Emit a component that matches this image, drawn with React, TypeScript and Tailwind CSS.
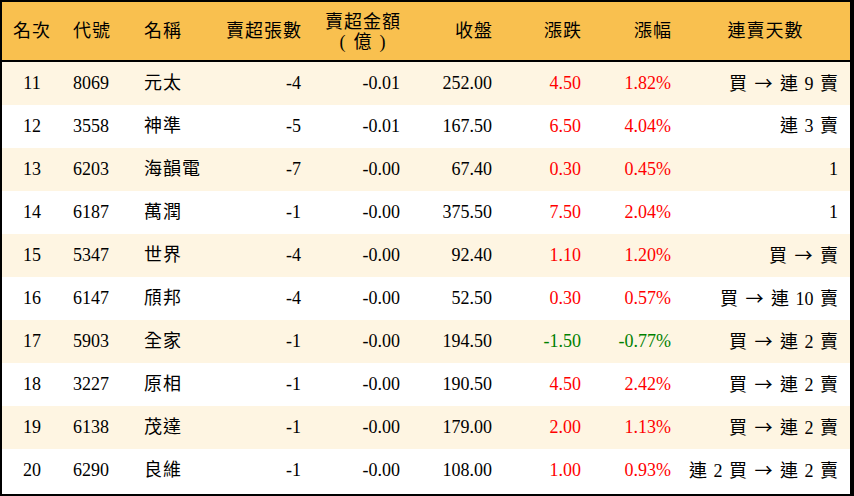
import React from 'react'

type Row = {
  rank: number
  code: string
  name: string
  qty: string
  amount: string
  close: string
  change: string
  pct: string
  streak: string
}

const rows: Row[] = [
  { rank: 11, code: '8069', name: '元太', qty: '-4', amount: '-0.01', close: '252.00', change: '4.50', pct: '1.82%', streak: '買 → 連 9 賣' },
  { rank: 12, code: '3558', name: '神準', qty: '-5', amount: '-0.01', close: '167.50', change: '6.50', pct: '4.04%', streak: '連 3 賣' },
  { rank: 13, code: '6203', name: '海韻電', qty: '-7', amount: '-0.00', close: '67.40', change: '0.30', pct: '0.45%', streak: '1' },
  { rank: 14, code: '6187', name: '萬潤', qty: '-1', amount: '-0.00', close: '375.50', change: '7.50', pct: '2.04%', streak: '1' },
  { rank: 15, code: '5347', name: '世界', qty: '-4', amount: '-0.00', close: '92.40', change: '1.10', pct: '1.20%', streak: '買 → 賣' },
  { rank: 16, code: '6147', name: '頎邦', qty: '-4', amount: '-0.00', close: '52.50', change: '0.30', pct: '0.57%', streak: '買 → 連 10 賣' },
  { rank: 17, code: '5903', name: '全家', qty: '-1', amount: '-0.00', close: '194.50', change: '-1.50', pct: '-0.77%', streak: '買 → 連 2 賣' },
  { rank: 18, code: '3227', name: '原相', qty: '-1', amount: '-0.00', close: '190.50', change: '4.50', pct: '2.42%', streak: '買 → 連 2 賣' },
  { rank: 19, code: '6138', name: '茂達', qty: '-1', amount: '-0.00', close: '179.00', change: '2.00', pct: '1.13%', streak: '買 → 連 2 賣' },
  { rank: 20, code: '6290', name: '良維', qty: '-1', amount: '-0.00', close: '108.00', change: '1.00', pct: '0.93%', streak: '連 2 買 → 連 2 賣' },
]

const cols = 'grid grid-cols-[60px_72px_76px_101px_99px_92px_89px_90px_169px]'

// the arrow is drawn wide in the reference, so give it the CJK face
function Streak({ text }: { text: string }) {
  const parts = text.split('→')
  return (
    <>
      {parts.map((p, i) => (
        <React.Fragment key={i}>
          {i > 0 && (
            <span style={{ fontFamily: '"Noto Sans CJK TC", sans-serif' }} className="inline-block w-[20px] text-center">
              →
            </span>
          )}
          {p}
        </React.Fragment>
      ))}
    </>
  )
}

export default function App() {
  return (
    <div
      className="w-[854px] h-[496px] bg-white border-t-2 border-l-2 border-r-4 border-b-2 border-black text-[18px] text-black"
      style={{ fontFamily: '"Liberation Serif", "Noto Sans CJK TC", serif' }}
    >
      {/* header */}
      <div className={`${cols} h-[60px] items-center bg-[#f9c04f] border-b-2 border-black tracking-[1px]`}>
        <div className="text-center">名次</div>
        <div className="pl-[11px]">代號</div>
        <div className="pl-[10px]">名稱</div>
        <div className="text-right pr-[9px]">賣超張數</div>
        <div className="text-right pr-[9px] leading-[20px] pt-[2px]">
          <span className="inline-block text-center">
            賣超金額
            <br />
            <span className="inline-flex items-center gap-[7px]">
              <span>(</span>
              <span>億</span>
              <span>)</span>
            </span>
          </span>
        </div>
        <div className="text-right pr-[9px]">收盤</div>
        <div className="text-right pr-[9px]">漲跌</div>
        <div className="text-right pr-[9px]">漲幅</div>
        <div className="text-center">連賣天數</div>
      </div>

      {rows.map((r, i) => {
        const color = r.change.startsWith('-') ? 'text-[#008000]' : 'text-[#ff0000]'
        return (
          <div
            key={r.rank}
            className={`${cols} h-[43px] items-center ${i % 2 === 0 ? 'bg-[#fef5e2]' : 'bg-white'}`}
          >
            <div className="text-center">{r.rank}</div>
            <div className="pl-[11px]">{r.code}</div>
            <div className="pl-[10px] tracking-[1px]">{r.name}</div>
            <div className="text-right pr-[10px]">{r.qty}</div>
            <div className="text-right pr-[10px]">{r.amount}</div>
            <div className="text-right pr-[10px]">{r.close}</div>
            <div className={`text-right pr-[10px] ${color}`}>{r.change}</div>
            <div className={`text-right pr-[10px] ${color}`}>{r.pct}</div>
            <div className="text-right pr-[12px] whitespace-pre [word-spacing:2px]">
              <Streak text={r.streak} />
            </div>
          </div>
        )
      })}
    </div>
  )
}
